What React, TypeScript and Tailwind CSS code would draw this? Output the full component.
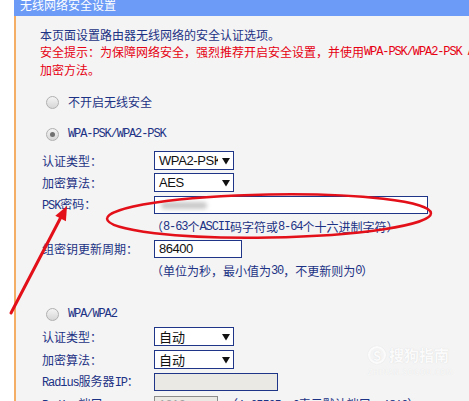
import React from "react";

const cjk = "font-['Noto_Sans_CJK_SC',sans-serif]";

function A({ children }: { children: React.ReactNode }) {
  return (
    <span className="font-['Liberation_Mono',monospace] text-[12px] tracking-[-1.1px]">
      {children}
    </span>
  );
}

function Radio({ checked }: { checked?: boolean }) {
  return (
    <span className="w-[13px] h-[13px] rounded-full border border-[#b0b0b0] bg-[linear-gradient(#f4f4f4,#d6d6d6)] flex items-center justify-center shrink-0">
      {checked && <span className="w-[5px] h-[5px] rounded-full bg-[#707070]" />}
    </span>
  );
}

function Sel({ text, latin }: { text: string; latin?: boolean }) {
  return (
    <div className="w-[80px] h-[19px] border border-[#1f3688] bg-white flex items-center relative overflow-hidden">
      <span
        className={
          latin
            ? "pl-[4px] font-['Liberation_Sans',sans-serif] text-[13px] tracking-[-0.4px] text-[#111] leading-[17px] whitespace-nowrap"
            : `pl-[4px] ${cjk} text-[13px] text-[#111] leading-[17px] whitespace-nowrap`
        }
      >
        {text}
      </span>
      <span className="absolute right-0 top-0 h-full w-[15px] bg-white flex items-center justify-center">
        <svg width="8" height="8" viewBox="0 0 8 8">
          <path d="M0 1H8L4 7.5Z" fill="#111" />
        </svg>
      </span>
    </div>
  );
}

function Label({ children }: { children: React.ReactNode }) {
  return <div className="w-[114px] pl-[2px] shrink-0">{children}</div>;
}

export default function App() {
  return (
    <div className={`w-[469px] h-[401px] overflow-hidden relative bg-white flex ${cjk}`}>
      <div className="w-[14px] shrink-0 bg-white" />
      <div className="flex-1 min-w-0 flex flex-col">
        <div className="h-[16px] shrink-0 bg-[#6b9bf6] overflow-hidden pl-[6px]">
          <div className="text-white text-[12px] leading-[10px] whitespace-nowrap">无线网络安全设置</div>
        </div>
        <div className="flex-1 bg-[#f4f4f4] border-l-2 border-[#f5ae66] pl-[24px] text-[12px] text-[#1c3284] whitespace-nowrap overflow-hidden">
          <div className="pt-[10px]">
            <div className="h-[17.5px] flex items-center">本页面设置路由器无线网络的安全认证选项。</div>
            <div className="h-[17.5px] flex items-center text-[#e60012]">
              安全提示：为保障网络安全，强烈推荐开启安全设置，并使用<A>WPA-PSK/WPA2-PSK AES</A>
            </div>
            <div className="h-[17.5px] flex items-center text-[#e60012]">加密方法。</div>
          </div>

          <div className="mt-[14.5px] h-[18px] flex items-center pl-[6px] gap-[9px]">
            <Radio />
            <span>不开启无线安全</span>
          </div>

          <div className="mt-[14px] h-[18px] flex items-center pl-[6px] gap-[9px]">
            <Radio checked />
            <A>WPA-PSK/WPA2-PSK</A>
          </div>

          <div className="mt-[8px] h-[19px] flex items-center">
            <Label>认证类型：</Label>
            <Sel text="WPA2-PSK" latin />
          </div>
          <div className="mt-[3px] h-[19px] flex items-center">
            <Label>加密算法：</Label>
            <Sel text="AES" latin />
          </div>
          <div className="mt-[4px] h-[18px] flex items-center">
            <Label>
              <A>PSK</A>密码：
            </Label>
            <div className="w-[274px] h-[18px] border border-[#1f3688] bg-white flex items-center pl-[6px]">
              <span className="w-[46px] h-[7px] rounded-full bg-[#c8c8c8] blur-[2px]" />
            </div>
          </div>
          <div className="mt-[5px] h-[16px] flex items-center pl-[111px]">
            （<A>8-63</A>个<A>ASCII</A>码字符或<A>8-64</A>个十六进制字符）
          </div>
          <div className="mt-[5px] h-[18px] flex items-center">
            <Label>组密钥更新周期：</Label>
            <div className="w-[88px] h-[18px] border border-[#1f3688] bg-white flex items-center pl-[4px] font-['Liberation_Sans',sans-serif] text-[13px] tracking-[-0.5px] text-[#111]">
              86400
            </div>
          </div>
          <div className="mt-[5px] h-[16px] flex items-center pl-[111px]">
            （单位为秒，最小值为<A>30</A>，不更新则为<A>0</A>）
          </div>

          <div className="mt-[26px] h-[18px] flex items-center pl-[6px] gap-[9px]">
            <Radio />
            <A>WPA/WPA2</A>
          </div>
          <div className="mt-[4px] h-[19px] flex items-center">
            <Label>认证类型：</Label>
            <Sel text="自动" />
          </div>
          <div className="mt-[4px] h-[19px] flex items-center">
            <Label>加密算法：</Label>
            <Sel text="自动" />
          </div>
          <div className="mt-[4px] h-[18px] flex items-center">
            <Label>
              <A>Radius</A>服务器<A>IP</A>：
            </Label>
            <div className="w-[124px] h-[18px] border border-[#1f3688] bg-[#ebe9e4]" />
          </div>
          <div className="mt-[5px] h-[18px] flex items-center">
            <Label>
              <A>Radius</A>端口：
            </Label>
            <div className="w-[64px] h-[18px] border border-[#8c8c8c] bg-[#ebe9e4] flex items-center pl-[4px] font-['Liberation_Sans',sans-serif] text-[12px] text-[#a0a0a0]">
              1812
            </div>
            <span className="ml-[8px]">
              （<A>1-65535</A>，<A>0</A>表示默认端口：<A>1812</A>）
            </span>
          </div>
        </div>
      </div>

      <div className="absolute left-[368px] top-[345px] flex flex-col items-start pointer-events-none">
        <div className="flex items-center gap-[3px] text-[#fbfbfb] font-bold [text-shadow:0_0_1px_#d4d4d4]">
          <span className="w-[18px] h-[18px] rounded-full border-2 border-[#fbfbfb] [box-shadow:0_0_1px_#d4d4d4] flex items-center justify-center text-[13px] leading-none">S</span>
          <span className="text-[15px] leading-[20px]">搜狗指南</span>
        </div>
        <div className="text-[7px] tracking-[1px] text-[#fbfbfb] [text-shadow:0_0_1px_#dcdcdc] leading-[10px] mt-[2px]">ZHINAN.SOGOU.COM</div>
      </div>

      <svg className="absolute inset-0 pointer-events-none" width="469" height="401" viewBox="0 0 469 401">
        <ellipse cx="269" cy="216" rx="162" ry="21.5" transform="rotate(-1 269 216)" fill="none" stroke="#e3101a" strokeWidth="2.5" />
        <line x1="11" y1="313" x2="61" y2="217" stroke="#e3101a" strokeWidth="3" strokeLinecap="round" />
        <path d="M67 206 L55.3 215.7 L65.9 221.3 Z" fill="#e3101a" />
      </svg>
    </div>
  );
}
